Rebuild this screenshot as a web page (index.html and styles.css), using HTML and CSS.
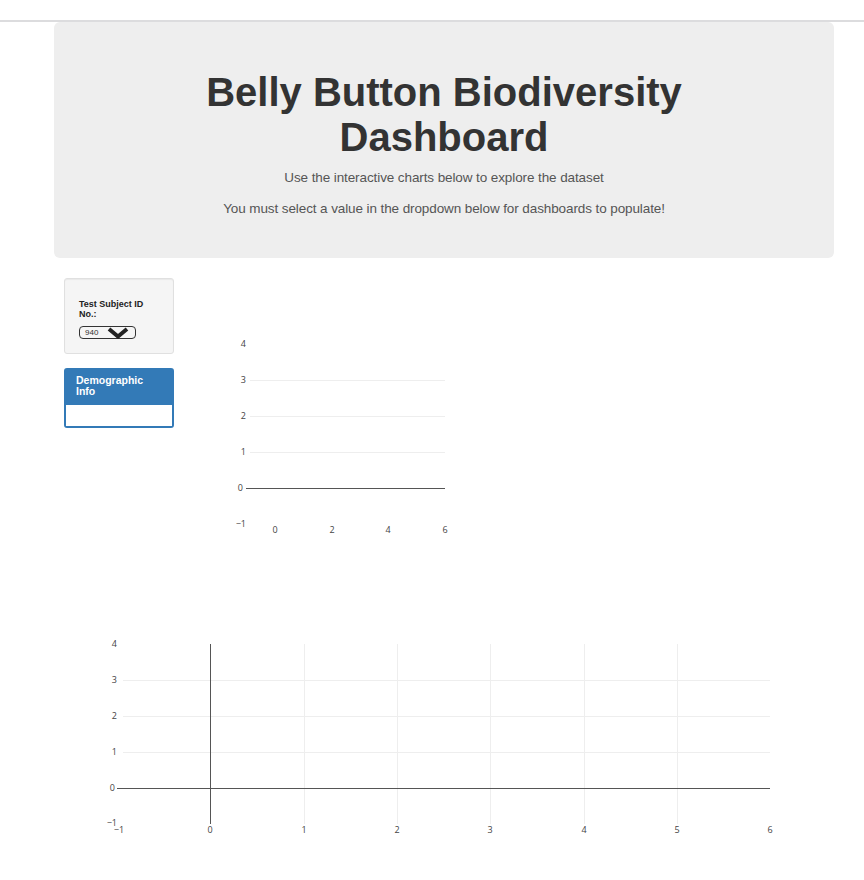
FILE: index.html
```html
<!DOCTYPE html>
<html>
<head>
<meta charset="utf-8">
<title>Belly Button Biodiversity Dashboard</title>
<link rel="stylesheet" href="styles.css">
</head>
<body>
<div class="topbar"></div>
<div class="container">
  <div class="jumbotron">
    <h1>Belly Button Biodiversity<br>Dashboard</h1>
    <p class="first">Use the interactive charts below to explore the dataset</p>
    <p>You must select a value in the dropdown below for dashboards to populate!</p>
  </div>
  <div class="row">
    <div class="side">
      <div class="well">
        <div class="label">Test Subject ID<br>No.:</div>
        <div class="select">
          <span class="val">940</span>
          <svg class="chev" width="24" height="12" viewBox="0 0 24 12"><path d="M3 2 L12 9.5 L21 2" fill="none" stroke="#222" stroke-width="4" stroke-linejoin="miter"/></svg>
        </div>
      </div>
      <div class="panel">
        <div class="panel-heading">Demographic<br>Info</div>
        <div class="panel-body"></div>
      </div>
    </div>
    <div class="main">
      <svg class="chart1" width="300" height="280" viewBox="0 0 300 280">
        <g stroke="#eee" stroke-width="1">
          <line x1="66" y1="102.5" x2="261" y2="102.5"/>
          <line x1="66" y1="138.5" x2="261" y2="138.5"/>
          <line x1="66" y1="174.5" x2="261" y2="174.5"/>
        </g>
        <line x1="62" y1="210.5" x2="261" y2="210.5" stroke="#555" stroke-width="1"/>
        <g class="tick" text-anchor="end">
          <text x="62" y="69">4</text>
          <text x="62" y="105">3</text>
          <text x="62" y="141">2</text>
          <text x="62" y="177">1</text>
          <text x="59" y="213">0</text>
          <text x="62" y="249">−1</text>
        </g>
        <g class="tick" text-anchor="middle">
          <text x="91" y="255">0</text>
          <text x="148" y="255">2</text>
          <text x="204" y="255">4</text>
          <text x="261" y="255">6</text>
        </g>
      </svg>
    </div>
  </div>
  <div class="bottom">
    <svg class="chart2" width="740" height="230" viewBox="0 0 740 230">
      <g stroke="#eee" stroke-width="1">
        <line x1="59" y1="60.5" x2="706" y2="60.5"/>
        <line x1="59" y1="96.5" x2="706" y2="96.5"/>
        <line x1="59" y1="132.5" x2="706" y2="132.5"/>
        <line x1="240.5" y1="24" x2="240.5" y2="204"/>
        <line x1="333.5" y1="24" x2="333.5" y2="204"/>
        <line x1="426.5" y1="24" x2="426.5" y2="204"/>
        <line x1="520.5" y1="24" x2="520.5" y2="204"/>
        <line x1="613.5" y1="24" x2="613.5" y2="204"/>
      </g>
      <line x1="53" y1="168.5" x2="706" y2="168.5" stroke="#555" stroke-width="1"/>
      <line x1="146.5" y1="24" x2="146.5" y2="204" stroke="#555" stroke-width="1"/>
      <g class="tick" text-anchor="end">
        <text x="53" y="27">4</text>
        <text x="53" y="63">3</text>
        <text x="53" y="99">2</text>
        <text x="53" y="135">1</text>
        <text x="51" y="171">0</text>
        <text x="53" y="206">−1</text>
      </g>
      <g class="tick" text-anchor="middle">
        <text x="55" y="213">−1</text>
        <text x="146" y="213">0</text>
        <text x="240" y="213">1</text>
        <text x="333" y="213">2</text>
        <text x="426" y="213">3</text>
        <text x="520" y="213">4</text>
        <text x="613" y="213">5</text>
        <text x="706" y="213">6</text>
      </g>
    </svg>
  </div>
</div>
</body>
</html>
```

FILE: styles.css
```css
html, body {
  margin: 0;
  padding: 0;
  background: #fff;
  font-family: "Liberation Sans", Arial, Helvetica, sans-serif;
  color: #333;
}

.topbar {
  height: 22px;
  border-bottom: 2px solid #dcdcde;
  box-sizing: border-box;
}

.container {
  width: 780px;
  margin: 0 0 0 54px;
}

.jumbotron {
  background: #eee;
  border-radius: 6px;
  height: 236px;
  box-sizing: border-box;
  padding-top: 48px;
  text-align: center;
}

.jumbotron h1 {
  margin: 0;
  font-size: 40px;
  line-height: 45px;
  font-weight: bold;
  color: #333;
}

.jumbotron p {
  margin: 10px 0 0;
  font-size: 13.5px;
  line-height: 21px;
  color: #555;
  letter-spacing: -0.1px;
}

.jumbotron p.first {
  margin-top: 7px;
}

.row {
  display: flex;
  margin-top: 20px;
  padding-left: 10px;
}

.side {
  width: 110px;
  display: flex;
  flex-direction: column;
  gap: 14px;
}

.well {
  background: #f5f5f5;
  border: 1px solid #e0e0e0;
  border-radius: 3px;
  box-shadow: inset 0 1px 1px rgba(0,0,0,0.05);
  height: 76px;
  box-sizing: border-box;
  padding: 21px 0 0 14px;
}

.label {
  font-size: 9px;
  font-weight: bold;
  line-height: 9.5px;
  color: #222;
}

.select {
  margin-top: 7px;
  width: 57px;
  height: 13px;
  box-sizing: border-box;
  border: 1px solid #333;
  border-radius: 4px;
  display: flex;
  align-items: center;
  background: #f5f5f5;
}

.val {
  font-size: 8px;
  line-height: 11px;
  margin-left: 5px;
  color: #333;
}

.chev {
  margin-left: 8px;
}

.panel {
  border: 2px solid #337ab7;
  border-radius: 3px;
  height: 60px;
  box-sizing: border-box;
  display: flex;
  flex-direction: column;
}

.panel-heading {
  background: #337ab7;
  color: #fff;
  font-size: 10.5px;
  font-weight: bold;
  line-height: 10.5px;
  height: 35px;
  box-sizing: border-box;
  padding: 5px 0 0 10px;
}

.panel-body {
  flex: 1;
  background: #fff;
}

.main {
  margin-left: 10px;
}

.chart1 {
  display: block;
}

.tick {
  font-family: "Open Sans", "DejaVu Sans", sans-serif;
  font-size: 9px;
  fill: #444;
}

.bottom {
  margin-top: 62px;
}

.chart2 {
  display: block;
  margin-left: 10px;
}
```
